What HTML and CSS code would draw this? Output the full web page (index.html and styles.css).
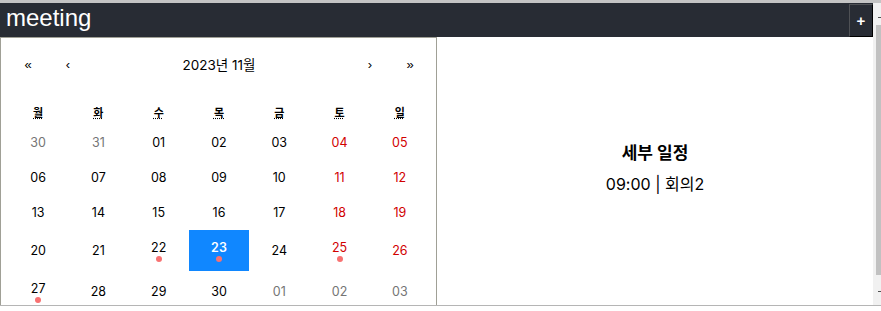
FILE: index.html
```html
<!DOCTYPE html>
<html>

<head>
    <meta charset="UTF-8">
    <title>meeting</title>
    <link rel="stylesheet" href="styles.css">
</head>

<body>
    <div class="frame">
        <div class="app">
            <div class="header">
                <h1 class="logo">meeting</h1>
                <button class="addBtn">+</button>
            </div>
            <div class="content">
                <div class="calendar">
                    <div class="nav">
                        <button class="navBtn">«</button>
                        <button class="navBtn">‹</button>
                        <span class="navLabel">2023년 11월</span>
                        <button class="navBtn">›</button>
                        <button class="navBtn">»</button>
                    </div>
                    <div class="weekdays">
                        <div><abbr>월</abbr></div>
                        <div><abbr>화</abbr></div>
                        <div><abbr>수</abbr></div>
                        <div><abbr>목</abbr></div>
                        <div><abbr>금</abbr></div>
                        <div><abbr>토</abbr></div>
                        <div><abbr>일</abbr></div>
                    </div>
                    <div class="days">
                        <div class="tile other">30</div>
                        <div class="tile other">31</div>
                        <div class="tile">01</div>
                        <div class="tile">02</div>
                        <div class="tile">03</div>
                        <div class="tile weekend">04</div>
                        <div class="tile weekend">05</div>

                        <div class="tile">06</div>
                        <div class="tile">07</div>
                        <div class="tile">08</div>
                        <div class="tile">09</div>
                        <div class="tile">10</div>
                        <div class="tile weekend">11</div>
                        <div class="tile weekend">12</div>

                        <div class="tile">13</div>
                        <div class="tile">14</div>
                        <div class="tile">15</div>
                        <div class="tile">16</div>
                        <div class="tile">17</div>
                        <div class="tile weekend">18</div>
                        <div class="tile weekend">19</div>

                        <div class="tile">20</div>
                        <div class="tile">21</div>
                        <div class="tile"><span>22</span><i class="dot"></i></div>
                        <div class="tile active"><span>23</span><i class="dot"></i></div>
                        <div class="tile">24</div>
                        <div class="tile weekend"><span>25</span><i class="dot"></i></div>
                        <div class="tile weekend">26</div>

                        <div class="tile"><span>27</span><i class="dot"></i></div>
                        <div class="tile">28</div>
                        <div class="tile">29</div>
                        <div class="tile">30</div>
                        <div class="tile other">01</div>
                        <div class="tile other">02</div>
                        <div class="tile other">03</div>
                    </div>
                </div>
                <div class="detail">
                    <h3 class="detailTitle">세부 일정</h3>
                    <p class="detailItem">09:00 | 회의2</p>
                </div>
            </div>
        </div>
        <div class="scrollbar">
            <span class="arrow up"></span>
            <span class="thumb"></span>
            <span class="arrow down"></span>
        </div>
    </div>
</body>

</html>
```

FILE: styles.css
```css
* {
    margin: 0;
    padding: 0;
    box-sizing: border-box;
}

body {
    background: #fff;
    font-family: Inter, "Noto Sans CJK KR", sans-serif;
    color: #000;
}

.frame {
    height: 306px;
    border-top: 3px solid #c4c4c4;
    border-bottom: 1px solid #b5b5b5;
    display: flex;
    overflow: hidden;
}

.app {
    flex: 1;
    display: flex;
    flex-direction: column;
    min-width: 0;
}

/* 상단 헤더 */
.header {
    height: 34px;
    background: #282c34;
    display: flex;
    align-items: flex-start;
    justify-content: space-between;
}

.logo {
    font-family: "Liberation Sans", Arial, sans-serif;
    font-weight: normal;
    font-size: 24px;
    line-height: 30px;
    color: #fff;
    padding-left: 6px;
}

.addBtn {
    width: 24px;
    height: 33px;
    margin-top: 1px;
    background: #282c34;
    border: 1px solid;
    border-color: #4f5155 #000 #000 #4f5155;
    color: #fff;
    font-family: "Liberation Sans", Arial, sans-serif;
    font-weight: bold;
    font-size: 15px;
    line-height: 1;
}

.content {
    flex: 1;
    display: flex;
    overflow: hidden;
}

/* 달력 */
.calendar {
    width: 437px;
    flex-shrink: 0;
    border: 1px solid #a0a096;
    padding: 4px 6px 8px 7px;
    align-self: flex-start;
}

.nav {
    display: flex;
    height: 44px;
    align-items: center;
    margin-bottom: 14px;
}

.navBtn {
    width: 40px;
    height: 44px;
    background: none;
    border: 0;
    font-family: "Liberation Sans", Arial, sans-serif;
    font-size: 13px;
    color: #000;
}

.navLabel {
    flex: 1;
    text-align: center;
    font-size: 13.5px;
}

.weekdays {
    display: grid;
    grid-template-columns: repeat(7, 1fr);
    height: 25px;
    align-items: center;
    text-align: center;
    font-size: 11px;
    font-weight: bold;
    line-height: 14px;
}

.weekdays abbr {
    text-decoration: underline dotted;
}

.days {
    display: grid;
    grid-template-columns: repeat(7, 1fr);
}

.tile {
    display: flex;
    flex-direction: column;
    align-items: center;
    justify-content: center;
    padding: 9.5px 6px;
    font-size: 12.5px;
    line-height: 16px;
    color: #000;
}

.tile.other {
    color: #757575;
}

.tile.weekend {
    color: #d10000;
}

.tile.active {
    background: #1087ff;
    color: #fff;
    font-weight: 600;
}

.tile .dot {
    width: 6px;
    height: 6px;
    border-radius: 50%;
    background: #f87171;
}

/* 세부 일정 */
.detail {
    flex: 1;
    display: flex;
    flex-direction: column;
    align-items: center;
    justify-content: center;
    padding-bottom: 6px;
}

.detailTitle {
    font-size: 17px;
    font-weight: bold;
    line-height: 24px;
    margin-bottom: 7px;
}

.detailItem {
    font-size: 16px;
    line-height: 24px;
}

/* 스크롤바 */
.scrollbar {
    width: 8px;
    background: #f1f1f1;
    position: relative;
}

.thumb {
    position: absolute;
    left: 3px;
    right: 0;
    top: 22px;
    height: 250px;
    background: #c1c1c1;
}

.arrow {
    position: absolute;
    left: 5px;
    width: 3px;
    height: 1px;
    background: #505050;
}

.arrow.up {
    top: 14px;
}

.arrow.down {
    bottom: 13px;
}
```
